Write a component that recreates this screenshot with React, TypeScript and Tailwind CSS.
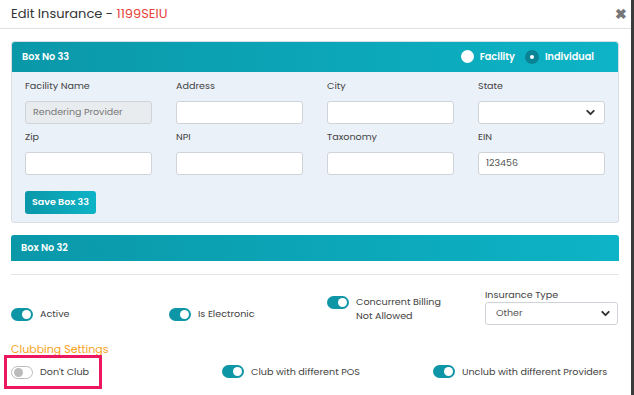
import React from 'react';
import { ChevronDown } from 'lucide-react';

const font = { fontFamily: 'Poppins, Inter, "Noto Sans", sans-serif' };

const Field: React.FC<{ label: string; value?: string; disabled?: boolean; select?: boolean }> = ({ label, value, disabled, select }) => (
  <div className="flex flex-col">
    <label className="text-[9.6px] text-[#444] leading-4 h-4 mb-[7px]">{label}</label>
    <div
      className={`h-[23px] w-[127px] rounded-[3px] border border-[#cfd4da] flex items-center justify-between px-[7px] text-[9.5px] ${
        disabled ? 'bg-[#e9ecef] text-[#777]' : 'bg-white text-[#555]'
      }`}
    >
      <span>{value}</span>
      {select && <ChevronDown size={13} strokeWidth={3.5} className="text-[#333]" />}
    </div>
  </div>
);

const Toggle: React.FC<{ on?: boolean }> = ({ on = true }) => (
  <div
    className={`w-[22px] h-[13px] rounded-full flex items-center px-[2px] shrink-0 ${
      on ? 'bg-[#0e96a6] justify-end' : 'bg-white border border-[#bbb] justify-start'
    }`}
  >
    <div className={`w-[9px] h-[9px] rounded-full ${on ? 'bg-white' : 'bg-[#bbb]'}`} />
  </div>
);

const PanelHeader: React.FC<{ title: string; children?: React.ReactNode; h: string }> = ({ title, children, h }) => (
  <div className={`${h} rounded-t-[3px] bg-gradient-to-r from-[#0a98a9] to-[#0db3c6] flex items-center justify-between pl-[10px] pr-[24px]`}>
    <span className="text-white text-[9.7px] font-semibold">{title}</span>
    {children}
  </div>
);

export default function App() {
  return (
    <div className="w-[634px] h-[395px] bg-[#3b3b3b] overflow-hidden flex" style={font}>
      <div className="w-[631px] h-full bg-white">
        {/* Header */}
        <div className="h-[29px] border-b border-[#dee2e6] flex items-center justify-between pl-[11px] pr-[4px]">
          <h1 className="text-[13px] text-[#333]">
            Edit Insurance - <span className="text-[#e8453c]">1199SEIU</span>
          </h1>
          <span className="text-[#777] text-[14px] font-bold leading-none">✖</span>
        </div>

        <div className="pl-[11px] pt-[12px] pr-[12px]">
          {/* Box 33 */}
          <div className="rounded-[3px] border border-[#d9dee4] bg-[#ebf1f9]">
            <PanelHeader title="Box No 33" h="h-[30px]">
              <div className="flex items-center text-white text-[9.7px] font-semibold">
                <span className="flex items-center gap-[6px]">
                  <span className="w-[13px] h-[13px] rounded-full bg-white" />
                  Facility
                </span>
                <span className="flex items-center gap-[6px] ml-[10px]">
                  <span className="w-[14px] h-[14px] rounded-full bg-[#0a8494] flex items-center justify-center">
                    <span className="w-[4px] h-[4px] rounded-full bg-white" />
                  </span>
                  Individual
                </span>
              </div>
            </PanelHeader>
            <div className="px-[13px] pt-[6px] pb-[8px]">
              <div className="grid grid-cols-4 gap-x-[24px] gap-y-[5px]">
                <Field label="Facility Name" value="Rendering Provider" disabled />
                <Field label="Address" />
                <Field label="City" />
                <Field label="State" select />
                <Field label="Zip" />
                <Field label="NPI" />
                <Field label="Taxonomy" />
                <Field label="EIN" value="123456" />
              </div>
              <button className="mt-[16px] h-[23px] w-[71px] rounded-[3px] bg-gradient-to-r from-[#0a98a9] to-[#0db3c6] text-white text-[9.5px] font-semibold">
                Save Box 33
              </button>
            </div>
          </div>

          {/* Box 32 */}
          <div className="mt-[12px]">
            <PanelHeader title="Box No 32" h="h-[26px]" />
          </div>

          <div className="mt-[13px] border-t border-[#e2e5e9]" />

          {/* Toggles */}
          <div className="mt-[12px] grid grid-cols-[158px_158px_158px_1fr] items-start text-[9.6px] text-[#444]">
            <div className="flex items-center gap-[7px] pt-[20px] leading-[14px]">
              <Toggle />
              <span>Active</span>
            </div>
            <div className="flex items-center gap-[7px] pt-[20px] leading-[14px]">
              <Toggle />
              <span>Is Electronic</span>
            </div>
            <div className="flex items-start gap-[7px] pt-[8px]">
              <div className="pt-[1px]">
                <Toggle />
              </div>
              <span className="leading-[14px]">
                Concurrent Billing
                <br />
                Not Allowed
              </span>
            </div>
            <div className="flex flex-col">
              <span className="leading-[15px]">Insurance Type</span>
              <div className="h-[23px] w-[133px] rounded-[3px] border border-[#cfd4da] bg-white flex items-center justify-between pl-[10px] pr-[5px] text-[9.5px] text-[#555]">
                <span>Other</span>
                <ChevronDown size={13} strokeWidth={3.5} className="text-[#333]" />
              </div>
            </div>
          </div>

          <div className="mt-[16px] text-[11px] leading-4 text-[#f7a21b]">Clubbing Settings</div>

          <div className="-mt-[2px] flex items-center text-[9.6px] text-[#444] whitespace-nowrap">
            <div className="-ml-[7px] w-[98px] h-[34px] shrink-0 border-[3px] border-[#ec1661] flex items-center gap-[7px] pl-[4px]">
              <Toggle on={false} />
              <span>Don't Club</span>
            </div>
            <div className="w-[331px] shrink-0 pl-[120px] flex items-center gap-[7px]">
              <Toggle />
              <span>Club with different POS</span>
            </div>
            <div className="flex items-center gap-[7px]">
              <Toggle />
              <span>Unclub with different Providers</span>
            </div>
          </div>
        </div>
      </div>
    </div>
  );
}
